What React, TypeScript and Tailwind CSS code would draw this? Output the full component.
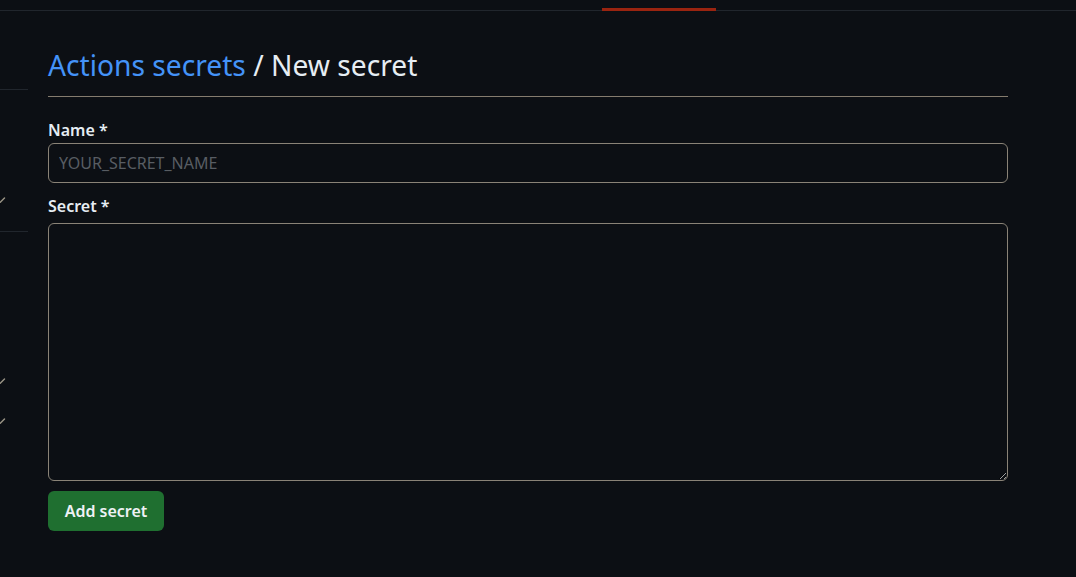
import { useState } from "react"

const font = { fontFamily: '"Noto Sans", "Open Sans", sans-serif' }

function SideTick() {
  return (
    <svg width="6" height="6" viewBox="0 0 6 6" className="block">
      <path d="M0 5.5 L4.5 1" stroke="#9a9486" strokeWidth="1.4" strokeLinecap="round" />
    </svg>
  )
}

export default function App() {
  const [name, setName] = useState("")
  const [secret, setSecret] = useState("")

  return (
    <div className="min-h-[577px] w-full bg-[#0c0f14] text-[#e6edf3]" style={font}>
      {/* top tab strip */}
      <div className="flex h-[11px] items-end border-b border-[#21262d]">
        <div className="ml-[602px] h-[3px] w-[114px] translate-y-[1px] bg-[#9a2410]" />
      </div>

      <div className="flex">
        {/* cropped sidebar */}
        <div className="relative w-[28px] shrink-0">
          <div className="mt-[78px] h-px w-[28px] bg-[#21262d]" />
          <div className="mt-[107px]">
            <SideTick />
          </div>
          <div className="mt-[28px] h-px w-[28px] bg-[#21262d]" />
          <div className="mt-[146px]">
            <SideTick />
          </div>
          <div className="mt-[34px]">
            <SideTick />
          </div>
        </div>

        <main className="ml-[20px] w-[960px]">
          <h1 className="border-b border-[#857c6e] pb-[11px] pt-[34px] text-[28.2px] leading-[40px] font-normal">
            <a className="text-[#4493f8]" href="#">
              Actions secrets
            </a>{" "}
            / New secret
          </h1>

          <form className="pt-[21px]" onSubmit={(e) => e.preventDefault()}>
            <label className="block text-[16px] leading-[24px] font-semibold">Name *</label>
            <input
              className="mt-[1px] block h-[40px] w-[960px] rounded-[6px] border border-[#8a8377] bg-[#0c0f14] px-[10px] text-[16px] text-[#e6edf3] placeholder:text-[#585d63] outline-none"
              placeholder="YOUR_SECRET_NAME"
              value={name}
              onChange={(e) => setName(e.target.value)}
            />
            <label className="mt-[11px] block text-[16px] leading-[24px] font-semibold">Secret *</label>
            <textarea
              className="mt-[5px] block h-[258px] w-[960px] rounded-[6px] border border-[#8a8377] bg-[#0c0f14] p-[11px] text-[16px] text-[#e6edf3] outline-none"
              value={secret}
              onChange={(e) => setSecret(e.target.value)}
            />
            <button
              type="submit"
              className="mt-[10px] h-[40px] w-[116px] rounded-[6px] bg-[#1f6f30] text-[16px] font-semibold text-[#eef2f5]"
            >
              Add secret
            </button>
          </form>
        </main>
      </div>
    </div>
  )
}
